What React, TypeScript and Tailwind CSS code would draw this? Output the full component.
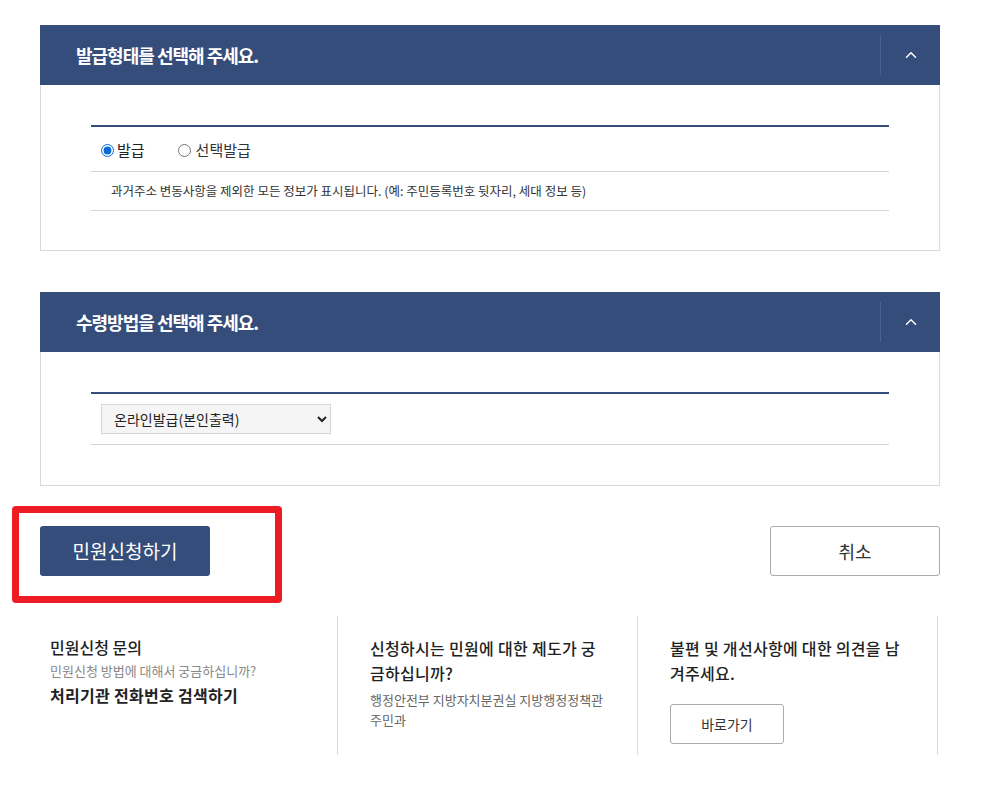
import { ChevronUp } from "lucide-react";

const font = { fontFamily: '"Noto Sans CJK KR", "Noto Sans", sans-serif' };

function PanelHeader({ title }: { title: string }) {
  return (
    <div className="h-[60px] bg-[#344d7a] flex items-center justify-between">
      <h2 className="pl-9 text-white text-[18px] font-bold tracking-[-1px]">{title}</h2>
      <div className="flex items-center h-full">
        <div className="w-px h-10 bg-[#4a6290]" />
        <button className="w-[59px] h-full flex items-center justify-center text-white">
          <ChevronUp className="w-[18px] h-[18px]" strokeWidth={2} />
        </button>
      </div>
    </div>
  );
}

export default function App() {
  return (
    <div className="w-[983px] h-[788px] bg-white text-[#222] overflow-hidden" style={font}>
      <div className="pt-[25px] pl-10 w-[940px]">
        {/* 발급형태 */}
        <section>
          <PanelHeader title="발급형태를 선택해 주세요." />
          <div className="border border-t-0 border-[#d9d9d9] px-[50px] pt-10 pb-10 h-[166px]">
            <div className="border-t-2 border-[#344d7a]">
              <div className="h-[45px] flex items-center pl-[10px] pt-[2px] border-b border-[#d5d5d5] text-[15px]">
                <label className="flex items-center gap-[3px] mr-[33px]">
                  <input type="radio" name="t" defaultChecked className="w-[13px] h-[13px] accent-[#0a6ad6]" />
                  <span>발급</span>
                </label>
                <label className="flex items-center gap-[5px]">
                  <input type="radio" name="t" className="w-[13px] h-[13px]" />
                  <span className="text-[#333]">선택발급</span>
                </label>
              </div>
              <div className="h-[39px] flex items-center pl-5 border-b border-[#d5d5d5] text-[12.5px] text-[#333]">
                과거주소 변동사항을 제외한 모든 정보가 표시됩니다. (예: 주민등록번호 뒷자리, 세대 정보 등)
              </div>
            </div>
          </div>
        </section>

        {/* 수령방법 */}
        <section className="mt-[41px]">
          <PanelHeader title="수령방법을 선택해 주세요." />
          <div className="border border-t-0 border-[#d9d9d9] px-[50px] pt-10 h-[134px]">
            <div className="border-t-2 border-[#344d7a]">
              <div className="h-[51px] flex items-center pl-[10px] border-b border-[#d5d5d5]">
                <select
                  className="w-[230px] h-[30px] border border-[#d5d5d5] bg-[#f5f5f5] text-[14px] pl-[8px] pr-2 text-[#222]"
                  style={font}
                >
                  <option>온라인발급(본인출력)</option>
                </select>
              </div>
            </div>
          </div>
        </section>

        {/* 버튼 */}
        <div className="mt-[20px] flex justify-between items-start">
          <div className="-ml-7 border-[7px] border-[#ed1c24] rounded-[4px] w-[270px] h-[97px] pt-[13px] pl-[21px]">
            <button className="w-[170px] h-[50px] bg-[#344d7a] rounded-[3px] text-white text-[19px]">
              민원신청하기
            </button>
          </div>
          <button className="mt-[20px] w-[170px] h-[50px] border border-[#aaa] rounded-[3px] bg-white text-[18px] text-[#333]">
            취소
          </button>
        </div>

        {/* 안내 */}
        <div className="mt-[13px] grid grid-cols-[298px_300px_300px]">
          <div className="h-[139px] border-r border-[#dcdcdc] pl-[10px] pt-[19px]">
            <p className="text-[16px] font-medium leading-[24px]">민원신청 문의</p>
            <p className="text-[13px] text-[#888] mt-[2px] leading-[20px]">민원신청 방법에 대해서 궁금하십니까?</p>
            <p className="text-[16px] font-bold leading-[24px] mt-[2px] tracking-[0.3px]">처리기관 전화번호 검색하기</p>
          </div>
          <div className="h-[139px] border-r border-[#dcdcdc] pl-[32px] pr-[28px] pt-[20px]">
            <p className="text-[16px] font-medium leading-[25px] tracking-[0.3px]">신청하시는 민원에 대한 제도가 궁금하십니까?</p>
            <p className="text-[13px] text-[#666] mt-[4px] leading-[20px]">행정안전부 지방자치분권실 지방행정정책관 주민과</p>
          </div>
          <div className="h-[139px] border-r border-[#dcdcdc] pl-[32px] pr-[28px] pt-[20px]">
            <p className="text-[16px] font-medium leading-[25px] tracking-[0.3px]">불편 및 개선사항에 대한 의견을 남겨주세요.</p>
            <button className="mt-[18px] w-[114px] h-[40px] border border-[#aaa] rounded-[3px] text-[14px] text-[#333]">
              바로가기
            </button>
          </div>
        </div>
      </div>
    </div>
  );
}
